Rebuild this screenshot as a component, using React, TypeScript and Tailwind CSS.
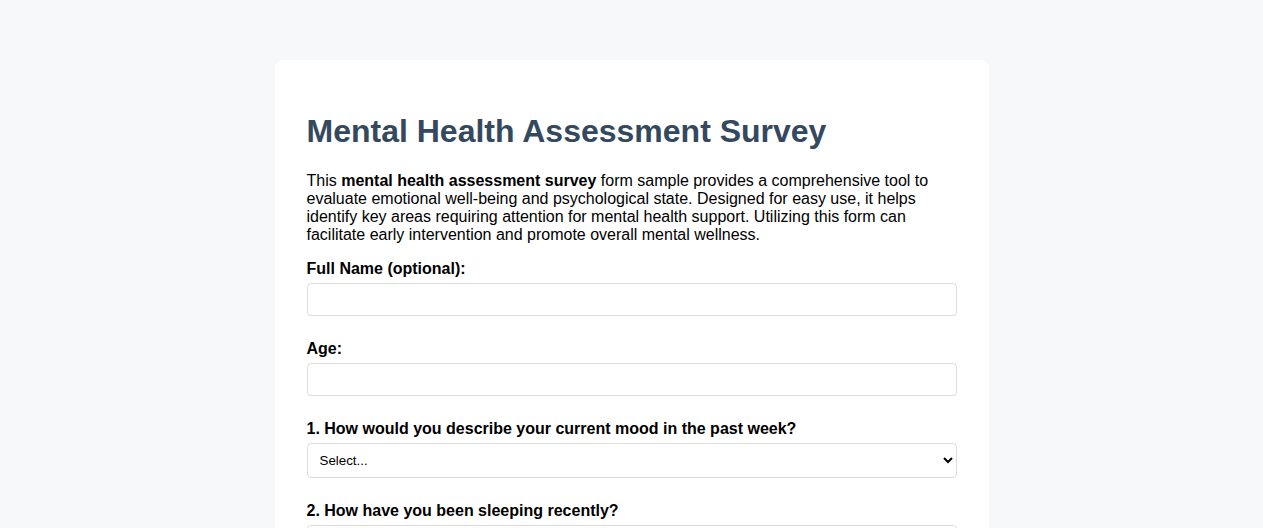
const QUESTIONS = [
  {
    label: "1. How would you describe your current mood in the past week?",
    options: ["Very good", "Good", "Neutral", "Low", "Very low"],
  },
  {
    label: "2. How have you been sleeping recently?",
    options: ["Very well", "Fairly well", "Poorly", "Very poorly"],
  },
  {
    label: "3. How often have you felt anxious or worried?",
    options: ["Never", "Sometimes", "Often", "Always"],
  },
];

export default function App() {
  return (
    <div className="min-h-screen bg-[#f7f8fa] pt-[60px] pb-10 font-['Liberation_Sans',Arial,sans-serif] text-black">
      <div className="mx-auto w-[714px] rounded-lg bg-white px-8 pt-8 pb-8">
        <h1 className="mt-[21px] mb-[22px] text-[32px] leading-[37px] font-bold text-[#34495e]">
          Mental Health Assessment Survey
        </h1>
        <p className="mb-4 text-base leading-[18px]">
          This <strong>mental health assessment survey</strong> form sample provides a comprehensive tool to
          evaluate emotional well-being and psychological state. Designed for easy use, it helps identify key
          areas requiring attention for mental health support. Utilizing this form can facilitate early
          intervention and promote overall mental wellness.
        </p>

        <form>
          <div className="mb-6">
            <label className="mb-[5px] block text-base leading-[18px] font-bold">Full Name (optional):</label>
            <input type="text" className="block h-[33px] w-full rounded border border-[#ddd] bg-white px-2 text-base" />
          </div>
          <div className="mb-6">
            <label className="mb-[5px] block text-base leading-[18px] font-bold">Age:</label>
            <input type="number" className="block h-[33px] w-full rounded border border-[#ddd] bg-white px-2 text-base" />
          </div>
          {QUESTIONS.map((q) => (
            <div key={q.label} className="mb-6">
              <label className="mb-[5px] block text-base leading-[18px] font-bold">{q.label}</label>
              <select
                defaultValue=""
                className="block h-[35px] w-full rounded border border-[#ddd] bg-white px-2 text-[13.33px] text-black"
              >
                <option value="">Select...</option>
                {q.options.map((o) => (
                  <option key={o}>{o}</option>
                ))}
              </select>
            </div>
          ))}
        </form>
      </div>
    </div>
  );
}
